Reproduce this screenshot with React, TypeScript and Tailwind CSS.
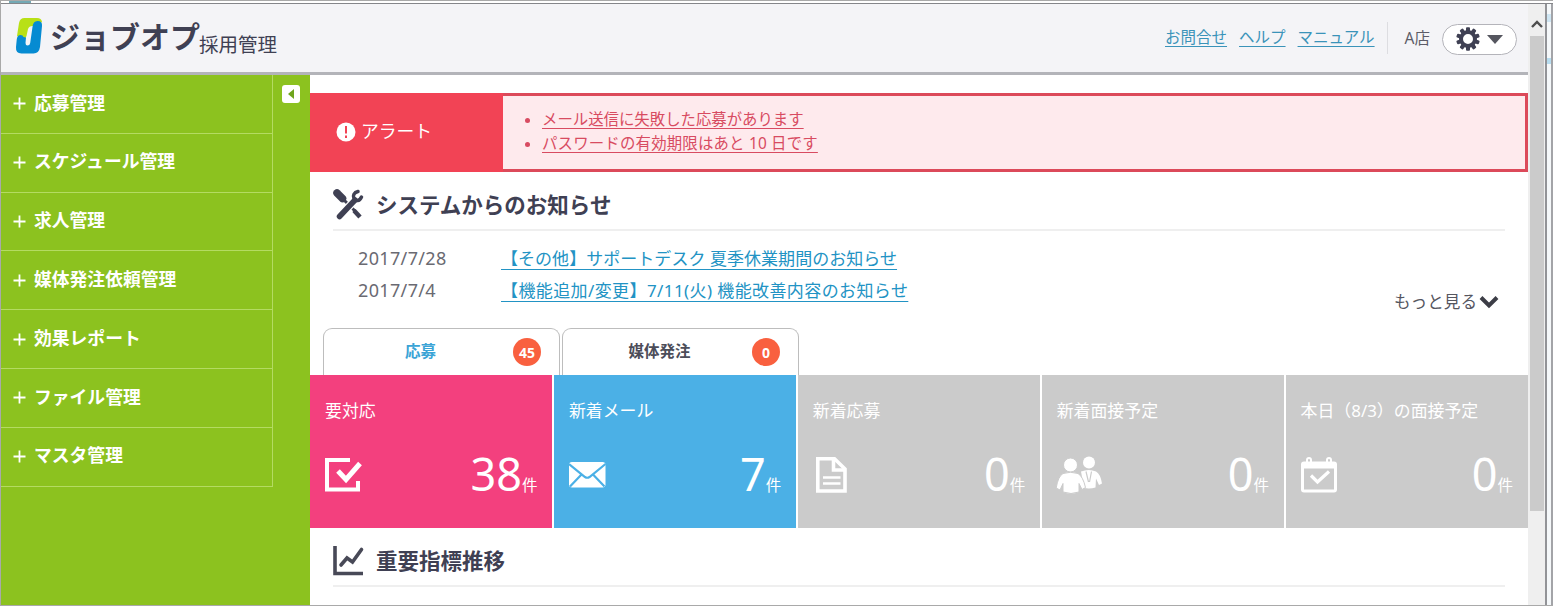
import type { ReactNode } from "react";

const menuItems = [
  "応募管理",
  "スケジュール管理",
  "求人管理",
  "媒体発注依頼管理",
  "効果レポート",
  "ファイル管理",
  "マスタ管理",
];

const news = [
  { date: "2017/7/28", title: "【その他】サポートデスク 夏季休業期間のお知らせ", spacing: "tracking-[0.04px]" },
  { date: "2017/7/4", title: "【機能追加/変更】7/11(火) 機能改善内容のお知らせ", spacing: "tracking-[0.4px]" },
];

function Logo() {
  return (
    <svg width="28" height="38" viewBox="0 0 28 38" className="shrink-0">
      <path d="M9.500 1H22Q26.500 1 27 5L22 9H17.500Q14 9 13 12L11.500 19L9 24L2 19L4 6Q5 1 9.500 1Z" fill="#b8e016" />
      <path
        d="M22.500 4Q27.500 4 27 9L25 30Q24 36.500 18.500 36.500H6.500Q.5 36.500 1 30L1.800 22Q2.500 18 5.500 18Q8 18.200 8.500 20L11 20.500L10.500 26Q10.500 28.500 12.500 28.500Q14.800 28.500 15.200 26L17.500 10Q18 4 22.500 4Z"
        fill="#068bd2"
      />
    </svg>
  );
}

function GearIcon() {
  return (
    <svg width="24" height="24" viewBox="0 0 24 24">
      <g fill="#3f4053">
        {[0, 36, 72, 108, 144, 180, 216, 252, 288, 324].map((angle) => (
          <rect key={angle} x="10" y="0.200" width="4" height="6" rx="1" transform={`rotate(${angle} 12 12)`} />
        ))}
      </g>
      <circle cx="12" cy="12" r="7" fill="none" stroke="#3f4053" strokeWidth="4" />
    </svg>
  );
}

function ToolsIcon() {
  return (
    <svg width="32" height="32" viewBox="0 0 32 32" fill="none" stroke="#3f4053">
      <path d="M4 4L9.500 9.500" strokeWidth="7.500" strokeLinecap="round" />
      <path d="M10 10L22 22" strokeWidth="3" />
      <path d="M21 21.500L27 28" strokeWidth="4.500" />
      <path d="M6.500 27.500L22 11" stroke="white" strokeWidth="8" />
      <path d="M6.500 27.500L22 11" strokeWidth="5.500" strokeLinecap="round" />
      <path d="M25 2.500C21 3.500 19.500 6.500 21 9.500S26.500 12.500 28.500 8" strokeWidth="3.500" strokeLinecap="round" />
    </svg>
  );
}

function ChartIcon() {
  return (
    <svg width="32" height="32" viewBox="0 0 32 32" fill="none" stroke="#484957" strokeWidth="3.600">
      <path d="M2 1V28.500H30" />
      <path d="M8 20L14 13L19.500 17L28.500 4.500" strokeLinecap="round" />
    </svg>
  );
}

function CheckIcon() {
  return (
    <svg width="38" height="36" viewBox="0 0 38 36" fill="none" stroke="white">
      <path d="M25 3H2V32.500H33V24" strokeWidth="4" />
      <path d="M13 14L21 22.500L35 6.500" strokeWidth="5" />
    </svg>
  );
}

function MailIcon() {
  return (
    <svg width="38" height="36" viewBox="0 0 38 36">
      <rect x="0" y="5" width="36.500" height="25.500" rx="3" fill="white" />
      <path d="M0 7L16 20Q18.200 21.500 20.500 20L36.500 7M1 29.500L12.500 17.500M35.500 29.500L24 17.500" fill="none" stroke="#4bb0e6" strokeWidth="2.200" />
    </svg>
  );
}

function DocumentIcon() {
  return (
    <svg width="38" height="36" viewBox="0 0 38 36" fill="none" stroke="white" strokeWidth="3.600">
      <path d="M4.800 1.800H21.500L32 12V34H4.800Z" />
      <path d="M20.500 2V13H32" />
      <path d="M10 20.500H27.500M10 26.500H27.500" strokeWidth="2.600" />
    </svg>
  );
}

function PeopleIcon() {
  return (
    <svg width="46" height="38" viewBox="0 0 46 38" className="overflow-visible">
      <g fill="white">
        <circle cx="32" cy="6.500" r="6" />
        <path d="M24 15.500Q32 12.500 39 15.500Q43.500 18 45 27.500L42 29L39 22.500L38.500 31.500Q33 33 27 32Z" />
      </g>
      <path d="M29 15.500L31.500 26M34.500 15.500L32.500 26" fill="none" stroke="#cbcbcb" strokeWidth="1.200" />
      <g fill="white" stroke="#cbcbcb" strokeWidth="1">
        <circle cx="13.500" cy="9" r="7" />
        <path d="M6 17.500Q13.500 15 21 17.500Q26 20.500 28.500 31.500L25 33.500L22 27.500V36Q14 39 6 36V27.500L3 34L-.8 32Q1 20.500 6 17.500Z" />
      </g>
    </svg>
  );
}

function CalendarIcon() {
  return (
    <svg width="38" height="36" viewBox="0 0 38 36">
      <g fill="none" stroke="white">
        <rect x="1.500" y="6" width="33" height="28" rx="1.500" strokeWidth="3" />
        <path d="M1 8.500H35" strokeWidth="6" />
        <path d="M6 8V3Q6 1 8 1T10 3V8M26 8V3Q26 1 28 1T30 3V8" strokeWidth="2" />
        <path d="M10 18.500L16.500 25L28 14.500" strokeWidth="3.200" />
      </g>
    </svg>
  );
}

const cards = [
  { title: "要対応", count: 38, color: "bg-[#f3407e]", icon: <CheckIcon /> },
  { title: "新着メール", count: 7, color: "bg-[#4bb0e6]", icon: <MailIcon /> },
  { title: "新着応募", count: 0, color: "bg-[#cbcbcb]", icon: <DocumentIcon /> },
  { title: "新着面接予定", count: 0, color: "bg-[#cbcbcb]", icon: <PeopleIcon /> },
  { title: "本日（8/3）の面接予定", count: 0, color: "bg-[#cbcbcb]", icon: <CalendarIcon /> },
];

function Header() {
  return (
    <header className="flex h-[71px] shrink-0 items-start border-b-[3px] border-[#b3b4b9] bg-[#f4f4f7]">
      <div className="flex pl-[14px] pt-[13px] text-[#3f4053]">
        <Logo />
        <span className="-mt-[2px] ml-[7px] w-[149px] whitespace-nowrap text-[30px] font-bold leading-[44px]">ジョブオプ</span>
        <span className="mt-[14px] text-[19.5px] leading-[28px]">採用管理</span>
      </div>
      <nav className="ml-auto flex h-[68px] items-center pr-[11px] text-[15.5px] text-[#3a93b9]">
        <a href="#" className="underline underline-offset-[3px]">お問合せ</a>
        <a href="#" className="ml-[12px] underline underline-offset-[3px]">ヘルプ</a>
        <a href="#" className="ml-[12px] underline underline-offset-[3px]">マニュアル</a>
        <span className="ml-[12px] h-[32px] border-l border-[#dddde1]" />
        <span className="ml-[17px] mt-[2px] text-[#5c5c68]">A店</span>
        <button className="ml-[12px] mt-[2px] flex h-[31px] w-[75px] items-center gap-[7px] rounded-full border border-[#b4b4ba] bg-white pl-[13px]">
          <GearIcon />
          <svg width="16" height="9" viewBox="0 0 16 9"><path d="M0 0H16L8 9Z" fill="#55565f" /></svg>
        </button>
      </nav>
    </header>
  );
}

function Sidebar() {
  return (
    <aside className="flex w-[309px] shrink-0 items-start bg-[#8cc21f]">
      <ul className="w-[272px] border-r border-[#b4db62]">
        {menuItems.map((item) => (
          <li key={item} className="flex h-[58.8px] items-center border-b border-[#b4db62] pb-[2px] pl-[12px] text-[17.8px] font-bold text-white">
            <svg width="13" height="13" viewBox="0 0 13 13" className="mr-[8px] mt-[2px]">
              <path d="M6.500 0.500V12.500M0.500 6.500H12.500" stroke="white" strokeWidth="1.800" />
            </svg>
            {item}
          </li>
        ))}
      </ul>
      <button className="ml-[9px] mt-[10px] flex h-[18px] w-[18px] items-center justify-center rounded-[3px] bg-white">
        <svg width="6" height="10" viewBox="0 0 6 10"><path d="M6 0V10L0 5Z" fill="#6fa51d" /></svg>
      </button>
    </aside>
  );
}

function Alert() {
  return (
    <div className="mt-[18px] flex h-[79px] border-[3px] border-[#dc4a5a] border-l-0 bg-[#feeaed]">
      <div className="-my-[3px] flex w-[193px] items-center bg-[#f24355] pb-[2px] pl-[26px] text-[17.8px] text-white">
        <svg width="20" height="20" viewBox="0 0 20 20" className="mr-[5px]">
          <circle cx="10" cy="10" r="9.500" fill="white" />
          <path d="M10 4V11.500M10 13.500V16" stroke="#f24355" strokeWidth="2" />
        </svg>
        アラート
      </div>
      <ul className="list-disc pl-[39px] pt-[12px] text-[15.4px] leading-[24px] text-[#d84b61]">
        <li><a href="#" className="underline underline-offset-[3px]">メール送信に失敗した応募があります</a></li>
        <li><a href="#" className="tracking-[0.2px] underline underline-offset-[3px]">パスワードの有効期限はあと 10 日です</a></li>
      </ul>
    </div>
  );
}

function SectionTitle({ icon, children }: { icon: ReactNode; children: ReactNode }) {
  return (
    <h2 className="mx-[23px] flex h-[59px] items-center border-b-2 border-[#efefef] pt-[9px] text-[21.5px] font-bold text-[#3f4053]">
      <span className="mr-[11px]">{icon}</span>
      {children}
    </h2>
  );
}

function Tab({ label, count, active }: { label: string; count: number; active?: boolean }) {
  return (
    <div className="flex h-[47px] w-[237px] items-center rounded-t-[9px] border border-b-0 border-[#bdbdbd] pl-[23px] text-[15.5px] font-bold">
      <span className={active ? "w-[147px] text-center text-[#3ba4d6]" : "w-[147px] text-center text-[#4c4d59]"}>{label}</span>
      <span className="ml-[19px] flex h-[28px] w-[28px] items-center justify-center rounded-full bg-[#f9603f] text-[14px] text-white">{count}</span>
    </div>
  );
}

function Scrollbar() {
  return (
    <div className="flex w-[17px] shrink-0 flex-col items-center bg-[#efefef]">
      <svg width="12" height="8" viewBox="0 0 12 8" className="mt-[16px]">
        <path d="M1 7L6 2L11 7" fill="none" stroke="#4e4e4e" strokeWidth="2.400" />
      </svg>
      <div className="mt-[8px] h-[475px] w-[14px] bg-[#cbcbcb]" />
    </div>
  );
}

export default function App() {
  return (
    <div className="flex h-[606px] w-[1553px] flex-col overflow-hidden border-b border-l border-t border-[#a9a9a9] bg-white font-['Noto_Sans','Noto_Sans_CJK_JP',sans-serif]">
      <div className="h-[3px] shrink-0 border-b border-[#85868a] pl-[8px]">
        <div className="h-[2px] w-[22px] bg-[#74a9b5]" />
      </div>
      <div className="flex min-h-0 flex-1">
        <div className="flex w-[1527px] shrink-0 flex-col">
          <Header />
          <div className="flex min-h-0 flex-1">
            <Sidebar />
            <main className="w-[1218px]">
              <Alert />
              <SectionTitle icon={<ToolsIcon />}>システムからのお知らせ</SectionTitle>
              <div className="flex h-[97px] pl-[48px] pr-[29px] pt-[12px] text-[17px]">
                <ul>
                  {news.map((item) => (
                    <li key={item.date} className="flex h-[31.5px] items-center">
                      <span className="w-[143px] text-[18px] tracking-[0.35px] text-[#6a6a72]">{item.date}</span>
                      <a href="#" className={`${item.spacing} whitespace-nowrap text-[#2293c4] underline underline-offset-[4px]`}>{item.title}</a>
                    </li>
                  ))}
                </ul>
                <button className="ml-auto mt-[45px] flex h-[28px] items-center text-[16.6px] text-[#55565f]">
                  もっと見る
                  <svg width="20" height="14" viewBox="0 0 20 14" className="ml-[2px]">
                    <path d="M2 2.500L10 10.500L18 2.500" fill="none" stroke="#3c3d46" strokeWidth="4" />
                  </svg>
                </button>
              </div>
              <div className="flex gap-[2px] pl-[13px]">
                <Tab label="応募" count={45} active />
                <Tab label="媒体発注" count={0} />
              </div>
              <div className="grid h-[153px] grid-cols-5 gap-[1.500px]">
                {cards.map((card) => (
                  <div key={card.title} className={`${card.color} px-[15px] pt-[23px] text-white`}>
                    <p className="whitespace-nowrap text-[16.9px] leading-[26px]">{card.title}</p>
                    <div className="mt-[29px] flex h-[44px] items-center">
                      {card.icon}
                      <p className="ml-auto mt-[8px] text-[45px] leading-[44px]">
                        {card.count}<span className="text-[15.5px]">件</span>
                      </p>
                    </div>
                  </div>
                ))}
              </div>
              <SectionTitle icon={<ChartIcon />}>重要指標推移</SectionTitle>
            </main>
          </div>
        </div>
        <Scrollbar />
        <div className="flex w-[8px] justify-end border-l-2 border-[#929397] bg-white">
          <div className="flex w-[6px] flex-col gap-[36px] border-r-2 border-[#a3a4a8] bg-[#f5f8fa] pt-[10px]">
            <div className="h-[8px] bg-[#cfe6f3]" />
            <div className="h-[6px] bg-[#b7ddf0]" />
          </div>
        </div>
      </div>
    </div>
  );
}
